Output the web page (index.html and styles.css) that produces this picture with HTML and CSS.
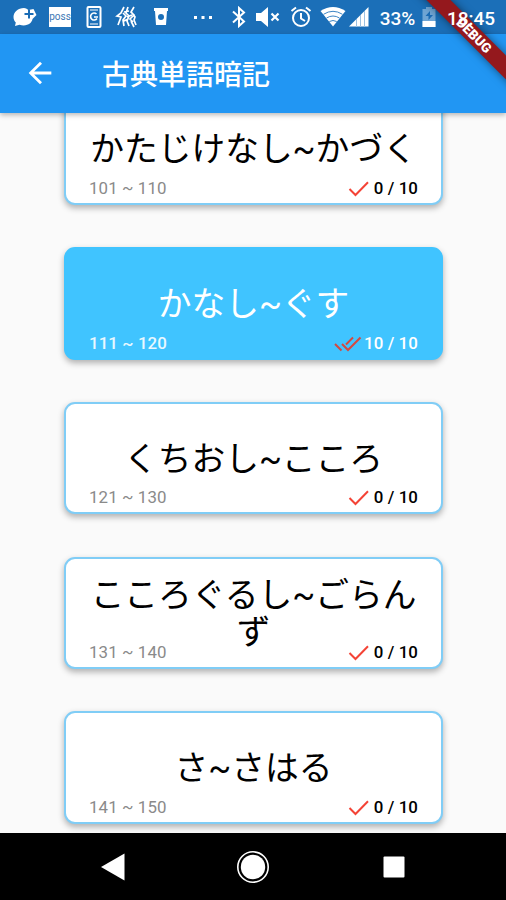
FILE: index.html
```html
<!DOCTYPE html>
<html lang="ja">
<head>
<meta charset="utf-8">
<title>古典単語暗記</title>
<link rel="stylesheet" href="styles.css">
</head>
<body>
<div class="status">
  <svg width="26" height="22" viewBox="0 0 26 22"><path fill="#fff" d="M12 2C6 2 1.500 6 1.500 11c0 2.500 1 4.300 2.300 5.500L3 20l4.500-1.200C15 21 20 17 20.500 13l4-4-3-6-5 1Q14 2 12 2z"/><path d="M17 3.500v9M12.500 8h9" stroke="#1b6cb5" stroke-width="2"/></svg>
  <svg width="24" height="22" viewBox="0 0 24 22"><path fill="#fff" d="M1 1h22v20H1z"/><text class="poss" x="12" y="14" text-anchor="middle">poss</text></svg>
  <svg width="16" height="22" viewBox="0 0 16 22"><rect x="1.500" y="1" width="13" height="20" rx="1" fill="none" stroke="#fff" stroke-width="2"/><path d="M4 4h8M4 18h8" stroke="#fff"/><path d="M10.500 8A3.500 3.500 0 1 0 11 12.500M8 11h4" fill="none" stroke="#fff" stroke-width="1.600"/></svg>
  <svg width="24" height="24" viewBox="0 0 24 24" fill="none" stroke="#fff" stroke-width="1.700"><path d="M9 2L6 8l-4 3 4 1-3 8M8 8l3 3-3 4 1 6M13 2l-2 6 3 3-2 5 2 5M19 2l-3 5 3 3-4 4 3 3M17 8l3 4-1 3 2 5M9 7l5-1M12 12l5-2M16 16l3 6M9 16l4-2"/></svg>
  <svg width="14" height="20" viewBox="0 0 14 20"><path fill="#fff" fill-rule="evenodd" d="M0 1h14v3h-1l-1 14H2L1 4H0zM7 7a3 3 0 1 0 0 6a3 3 0 1 0 0-6z"/></svg>
  <svg width="20" height="6" viewBox="0 0 20 6" fill="#fff"><path d="M1 2h3v3H1zM8.500 2h3v3h-3zM16 2h3v3h-3z"/></svg>
  <svg width="16" height="22" viewBox="0 0 16 22" fill="none" stroke="#fff" stroke-width="2"><path d="M2 5.500l11 10-5 4.500V2l5 4.500-11 10"/></svg>
  <svg width="26" height="22" viewBox="0 0 26 22"><path fill="#fff" d="M1 7h5l7-6v20l-7-6H1z"/><path d="M16.500 7.500l7 7m0-7l-7 7" stroke="#fff" stroke-width="2.200"/></svg>
  <svg width="22" height="22" viewBox="0 0 22 22" fill="none" stroke="#fff" stroke-width="2"><circle cx="11" cy="12" r="8"/><path d="M11 7v5.500l4 2.500M1.500 5L6 1.500M16 1.500L20.500 5"/></svg>
  <svg width="26" height="20" viewBox="0 0 26 20"><path fill="#fff" d="M13 19.500L.5 4Q13-4 25.500 4z"/><path d="M3.500 7.300q9.500-6 19 0M6.500 11q6.500-4 13 0M9.300 14.500q3.700-2 7.400 0" fill="none" stroke="#3d85c4" stroke-width="1"/></svg>
  <svg class="signal" width="20" height="20" viewBox="0 0 20 20"><path fill="#fff" d="M0 19.500L19.500 0v19.500z"/><path d="M7.500 12v8M11.500 8v12M15.500 4v16" stroke="#9cc1e2"/></svg>
  <span>33%</span>
  <svg width="14" height="20" viewBox="0 0 14 20"><path fill="#6fa5d4" d="M4 0h6v2h3.500v18H.5V2H4z"/><path fill="#fff" d="M.5 14h13v6H.5z"/><path fill="#1b6cb5" d="M8 4L3.500 9h3v4L11 8H8z"/></svg>
  <span class="clock">18:45</span>
</div>
<header class="appbar">
  <svg class="back" width="34" height="34" viewBox="0 0 24 24"><path fill="#fff" d="M20 11H7.830l5.590-5.590L12 4l-8 8 8 8 1.410-1.410L7.830 13H20v-2z"/></svg>
  <h1>古典単語暗記</h1>
</header>
<div class="corner"><div class="ribbon">DEBUG</div></div>
<main class="list">
  <section class="card">
    <h2>かたじけなし~かづく</h2>
    <div class="meta"><span class="range">101 ~ 110</span><svg width="22" height="22" viewBox="0 0 22 22"><path class="tick" d="M1.500 12l6 6L20 5.300"/></svg><b>0 / 10</b></div>
  </section>
  <section class="card done">
    <h2>かなし~ぐす</h2>
    <div class="meta"><span class="range">111 ~ 120</span><svg width="28" height="22" viewBox="0 0 28 22"><path class="tick" d="M1 12l6.500 6.500M8 12l6 6L26.500 5.500M12 12.500l7-7"/></svg><b>10 / 10</b></div>
  </section>
  <section class="card">
    <h2>くちおし~こころ</h2>
    <div class="meta"><span class="range">121 ~ 130</span><svg width="22" height="22" viewBox="0 0 22 22"><path class="tick" d="M1.500 12l6 6L20 5.300"/></svg><b>0 / 10</b></div>
  </section>
  <section class="card">
    <h2>こころぐるし~ごらんず</h2>
    <div class="meta"><span class="range">131 ~ 140</span><svg width="22" height="22" viewBox="0 0 22 22"><path class="tick" d="M1.500 12l6 6L20 5.300"/></svg><b>0 / 10</b></div>
  </section>
  <section class="card">
    <h2>さ~さはる</h2>
    <div class="meta"><span class="range">141 ~ 150</span><svg width="22" height="22" viewBox="0 0 22 22"><path class="tick" d="M1.500 12l6 6L20 5.300"/></svg><b>0 / 10</b></div>
  </section>
</main>
<nav class="navbar">
  <svg width="34" height="34" viewBox="0 0 34 34"><path fill="#fff" d="M6 17L29.500 3.500v27z"/></svg>
  <svg width="34" height="34" viewBox="0 0 34 34"><circle cx="17" cy="17" r="12.200" fill="#fff"/><circle cx="17" cy="17" r="15.200" fill="none" stroke="#fff" stroke-width="1.600"/></svg>
  <svg width="34" height="34" viewBox="0 0 34 34"><rect x="6.500" y="6.500" width="21" height="21" rx="1" fill="#fff"/></svg>
</nav>
</body>
</html>
```
FILE: styles.css
```css
* { box-sizing: border-box; }
body {
  margin: 0;
  height: 900px;
  position: relative;
  overflow: hidden;
  display: flex;
  flex-direction: column;
  background: #fafafa;
  font-family: Roboto, "Noto Sans CJK JP", sans-serif;
}
svg { display: block; flex: none; }
.status {
  flex: none;
  height: 34px;
  padding-left: 8px;
  display: grid;
  grid-template-columns: 34px 35px 33px 34px 34px 50px 22px 36px 30px 33px 25px 47px 15px 70px;
  align-items: center;
  justify-items: center;
  background: #1b6fb8;
  color: #fff;
  font-size: 19px;
  font-weight: 500;
}
.status span { padding-top: 2px; }
.clock { z-index: 3; }
.signal { justify-self: start; }
.poss { font: 10px Roboto, sans-serif; fill: #3c78b4; }
.appbar {
  flex: none;
  height: 79px;
  padding: 0 0 1px 23px;
  display: flex;
  align-items: center;
  gap: 45px;
  background: #2196f3;
  color: #fff;
  box-shadow: 0 2px 5px rgba(0, 0, 0, .28);
  z-index: 1;
}
h1 { margin: 0; padding-top: 6px; font-size: 28px; font-weight: 500; line-height: 40px; }
.corner {
  position: absolute;
  z-index: 2;
  top: 0;
  right: 0;
  width: 110px;
  height: 110px;
  overflow: hidden;
}
.ribbon {
  position: absolute;
  top: 27px;
  left: -12px;
  width: 180px;
  height: 17px;
  line-height: 17px;
  text-align: center;
  transform: rotate(45deg);
  background: #94181d;
  color: #fff;
  font-size: 13.500px;
  font-weight: 900;
  box-shadow: 0 0 8px rgba(0, 0, 0, .5);
}
.list {
  flex: 1;
  min-height: 0;
  overflow: hidden;
  display: flex;
  flex-direction: column;
  align-items: center;
  gap: 42.200px;
}
.card {
  flex: none;
  width: 379px;
  margin-left: 1px;
  height: 112.500px;
  display: grid;
  grid-template: 100% / 100%;
  padding: 0 23px;
  border: 2px solid #80cdf6;
  border-radius: 11px;
  background: #fff;
  box-shadow: 0 3px 6px rgba(0, 0, 0, .3);
  color: #000;
}
.card:first-child { margin-top: -20.400px; }
.card h2 {
  grid-area: 1 / 1;
  align-self: center;
  margin: 0;
  padding-top: 2px;
  text-align: center;
  font-size: 33.730px;
  font-weight: 400;
  line-height: 37px;
}
.meta {
  grid-area: 1 / 1;
  align-self: end;
  display: flex;
  align-items: center;
  height: 22px;
  margin-bottom: 4px;
  font-size: 16.870px;
  letter-spacing: .1px;
}
.range { margin-right: auto; color: #8a8a8a; }
.meta b { font-weight: 500; margin-left: 4px; }
.tick { fill: none; stroke: #f44336; stroke-width: 2; }
.done { background: #40c4ff; border-color: #40c4ff; color: #fff; }
.done .range { color: #e9f8ff; font-weight: 500; }
.done .meta b { margin-left: 2px; }
.done .tick { stroke: #d5483f; }
.navbar {
  flex: none;
  height: 67px;
  padding: 0 95px;
  display: flex;
  align-items: center;
  justify-content: space-between;
  background: #000;
  z-index: 1;
}
```
